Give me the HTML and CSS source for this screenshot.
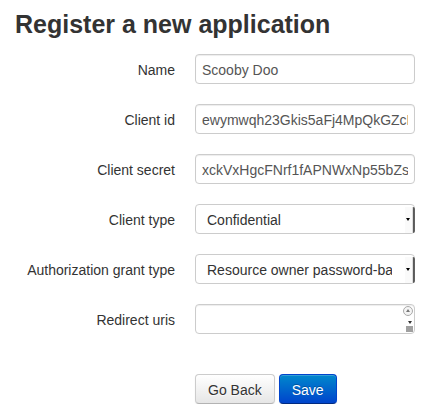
FILE: index.html
```html
<!DOCTYPE html>
<html>
<head>
<meta charset="utf-8">
<link rel="stylesheet" href="styles.css">
</head>
<body>
<div class="container">
  <h3 class="title">Register a new application</h3>
  <form class="form-horizontal">
    <div class="control-group">
      <label class="control-label">Name</label>
      <div class="controls"><input class="field" type="text" value="Scooby Doo"></div>
    </div>
    <div class="control-group">
      <label class="control-label">Client id</label>
      <div class="controls"><input class="field" type="text" value="ewymwqh23Gkis5aFj4MpQkGZcH8sLq2"></div>
    </div>
    <div class="control-group">
      <label class="control-label">Client secret</label>
      <div class="controls"><input class="field" type="text" value="xckVxHgcFNrf1fAPNWxNp55bZsT9wQe"></div>
    </div>
    <div class="control-group">
      <label class="control-label">Client type</label>
      <div class="controls">
        <div class="select-wrap">
          <select class="field select"><option>Confidential</option></select>
          <span class="select-arrow"></span>
        </div>
      </div>
    </div>
    <div class="control-group">
      <label class="control-label">Authorization grant type</label>
      <div class="controls">
        <div class="select-wrap">
          <select class="field select"><option>Resource owner password-based</option></select>
          <span class="select-arrow"></span>
        </div>
      </div>
    </div>
    <div class="control-group">
      <label class="control-label">Redirect uris</label>
      <div class="controls">
        <div class="select-wrap">
          <textarea class="field area" rows="1"></textarea>
          <span class="scroll-up"></span>
          <span class="scroll-down"></span>
          <span class="grip"></span>
        </div>
      </div>
    </div>
    <div class="form-actions">
      <a class="btn">Go Back</a>
      <button type="button" class="btn btn-primary">Save</button>
    </div>
  </form>
</div>
</body>
</html>
```

FILE: styles.css
```css
html, body {
  margin: 0;
  padding: 0;
  background: #fff;
}
body {
  font-family: "Liberation Sans", Arial, sans-serif;
  font-size: 14px;
  line-height: 20px;
  color: #333;
}
.container {
  padding-left: 15px;
}
.title {
  margin: 9px 0 15px 0;
  font-size: 25px;
  line-height: 30px;
  font-weight: bold;
  color: #333;
}
.form-horizontal {
  margin: 0;
}
.control-group {
  display: flex;
  margin-bottom: 20px;
}
.control-label {
  width: 160px;
  padding-top: 6px;
  text-align: right;
  flex-shrink: 0;
}
.controls {
  margin-left: 20px;
}
.field {
  display: block;
  box-sizing: border-box;
  width: 220px;
  height: 30px;
  margin: 0;
  padding: 5px 6px 3px;
  font-family: "Liberation Sans", Arial, sans-serif;
  font-size: 14px;
  line-height: 20px;
  color: #555;
  background: #fff;
  border: 1px solid #ccc;
  border-radius: 4px;
  box-shadow: inset 0 1px 1px rgba(0,0,0,0.075);
  outline: none;
}
.select-wrap {
  position: relative;
  width: 220px;
}
.select {
  -webkit-appearance: none;
  appearance: none;
  padding: 5px 22px 3px 11px;
  color: #333;
  box-shadow: none;
}
.select-arrow {
  position: absolute;
  right: 0;
  top: 3px;
  bottom: 1px;
  width: 10px;
  background: linear-gradient(to right, #fafafa 0, #fafafa 7px, #dcdcdc 7px, #dcdcdc 8px, #555 8px, #666 10px);
  border-radius: 0 2px 2px 0;
}
.select-arrow::after {
  content: "";
  position: absolute;
  left: 1px;
  top: 11px;
  border-left: 2.5px solid transparent;
  border-right: 2.5px solid transparent;
  border-top: 3px solid #000;
}
.area {
  resize: none;
  overflow: hidden;
}
.scroll-up {
  position: absolute;
  right: 2px;
  top: 2px;
  width: 8px;
  height: 8px;
  border: 1px solid #aaa;
  border-radius: 50%;
  background: #f4f4f4;
}
.scroll-up::after {
  content: "";
  position: absolute;
  left: 1.5px;
  top: 2px;
  border-left: 2.5px solid transparent;
  border-right: 2.5px solid transparent;
  border-bottom: 3px solid #777;
}
.scroll-down {
  position: absolute;
  right: 3px;
  top: 17px;
  border-left: 2.5px solid transparent;
  border-right: 2.5px solid transparent;
  border-top: 3px solid #333;
}
.grip {
  position: absolute;
  right: 2px;
  bottom: 2px;
  width: 7px;
  height: 6px;
  background-image: radial-gradient(circle, #999 0.7px, transparent 0.8px);
  background-size: 2px 2px;
}
.form-actions {
  padding: 20px 0 0 180px;
  display: flex;
  gap: 4px;
}
.btn {
  display: inline-block;
  box-sizing: border-box;
  height: 30px;
  padding: 5px 12px 3px;
  font-family: "Liberation Sans", Arial, sans-serif;
  font-size: 14px;
  line-height: 20px;
  color: #333;
  text-align: center;
  text-shadow: 0 1px 1px rgba(255,255,255,0.75);
  background: linear-gradient(to bottom, #ffffff, #e6e6e6);
  border: 1px solid #ccc;
  border-bottom-color: #b3b3b3;
  border-radius: 4px;
  box-shadow: inset 0 1px 0 rgba(255,255,255,0.2), 0 1px 2px rgba(0,0,0,0.05);
  cursor: pointer;
}
.btn-primary {
  color: #fff;
  text-shadow: 0 -1px 0 rgba(0,0,0,0.25);
  background: linear-gradient(to bottom, #0088cc, #0044cc);
  border: 1px solid #0044cc;
  border-bottom-color: #002a80;
}
```
